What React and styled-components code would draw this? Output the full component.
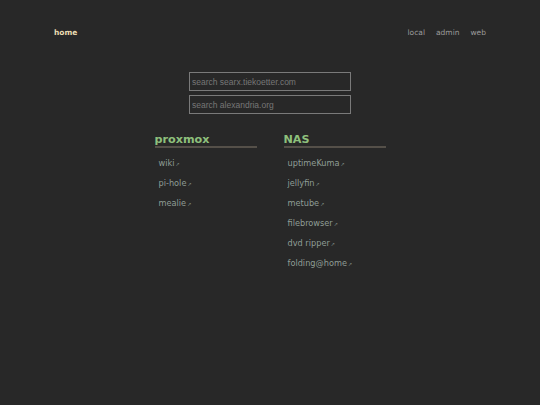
import React from 'react';
import styled, {createGlobalStyle} from 'styled-components';

const GlobalStyle = createGlobalStyle`
    html, body {
        margin: 0;
        padding: 0;
        background: #282828;
    }
    body {
        font-family: "DejaVu Sans", Verdana, sans-serif;
    }
`;

const Page = styled.div`
    width: 540px;
    height: 405px;
    background: #282828;
    box-sizing: border-box;
    padding-top: 27px;
`;

const TopBar = styled.nav`
    display: flex;
    align-items: center;
    justify-content: space-between;
    padding: 0 54px;
    height: 11px;
`;

const HomeLink = styled.a`
    color: #ebdbb2;
    font-weight: bold;
    font-size: 7.5px;
    text-decoration: none;
`;

const NavLinks = styled.div`
    display: flex;
    gap: 11px;
`;

const NavLink = styled.a`
    color: #9c9c9c;
    font-size: 7.5px;
    text-decoration: none;
`;

const SearchBox = styled.form`
    display: flex;
    flex-direction: column;
    align-items: center;
    gap: 4px;
    margin-top: 34px;
`;

const SearchInput = styled.input`
    width: 162px;
    height: 19px;
    box-sizing: border-box;
    background: transparent;
    border: 1px solid #7a7a7a;
    padding: 0 2px;
    font-family: "Liberation Sans", Arial, sans-serif;
    font-size: 8.5px;
    color: #cfcfcf;
    outline: none;

    &::placeholder {
        color: #777777;
    }
`;

const Columns = styled.div`
    display: flex;
    justify-content: center;
    gap: 27px;
    margin-top: 18px;
`;

const Column = styled.section`
    width: 102px;
`;

const Heading = styled.h2`
    margin: 0;
    font-size: 11.2px;
    font-weight: bold;
    color: #8ec07c;
    line-height: 13px;
    padding-top: 1px;
    border-bottom: 2px solid #555049;
`;

const LinkList = styled.ul`
    list-style: none;
    margin: 0;
    padding: 10px 0 0 4px;
    display: flex;
    flex-direction: column;
    gap: 10px;
`;

const Item = styled.li`
    display: flex;
    align-items: baseline;
    height: 10px;
    line-height: 10px;
`;

const ServiceLink = styled.a`
    color: #8f9d96;
    font-size: 8.2px;
    line-height: 10px;
    text-decoration: none;
`;

const Arrow = styled.span`
    font-size: 5px;
    line-height: 10px;
    color: #7a847f;
    margin-left: 1px;
`;

const groups = [
    {title: 'proxmox', links: ['wiki', 'pi-hole', 'mealie']},
    {
        title: 'NAS',
        links: ['uptimeKuma', 'jellyfin', 'metube', 'filebrowser', 'dvd ripper', 'folding@home'],
    },
];

const App = () => {
    return (
        <>
            <GlobalStyle />
            <Page>
                <TopBar>
                    <HomeLink href="#">home</HomeLink>
                    <NavLinks>
                        <NavLink href="#">local</NavLink>
                        <NavLink href="#">admin</NavLink>
                        <NavLink href="#">web</NavLink>
                    </NavLinks>
                </TopBar>
                <SearchBox onSubmit={(e) => e.preventDefault()}>
                    <SearchInput placeholder="search searx.tiekoetter.com" />
                    <SearchInput placeholder="search alexandria.org" />
                </SearchBox>
                <Columns>
                    {groups.map((group) => (
                        <Column key={group.title}>
                            <Heading>{group.title}</Heading>
                            <LinkList>
                                {group.links.map((name) => (
                                    <Item key={name}>
                                        <ServiceLink href="#">{name}</ServiceLink>
                                        <Arrow>↗</Arrow>
                                    </Item>
                                ))}
                            </LinkList>
                        </Column>
                    ))}
                </Columns>
            </Page>
        </>
    );
};

export default App;
